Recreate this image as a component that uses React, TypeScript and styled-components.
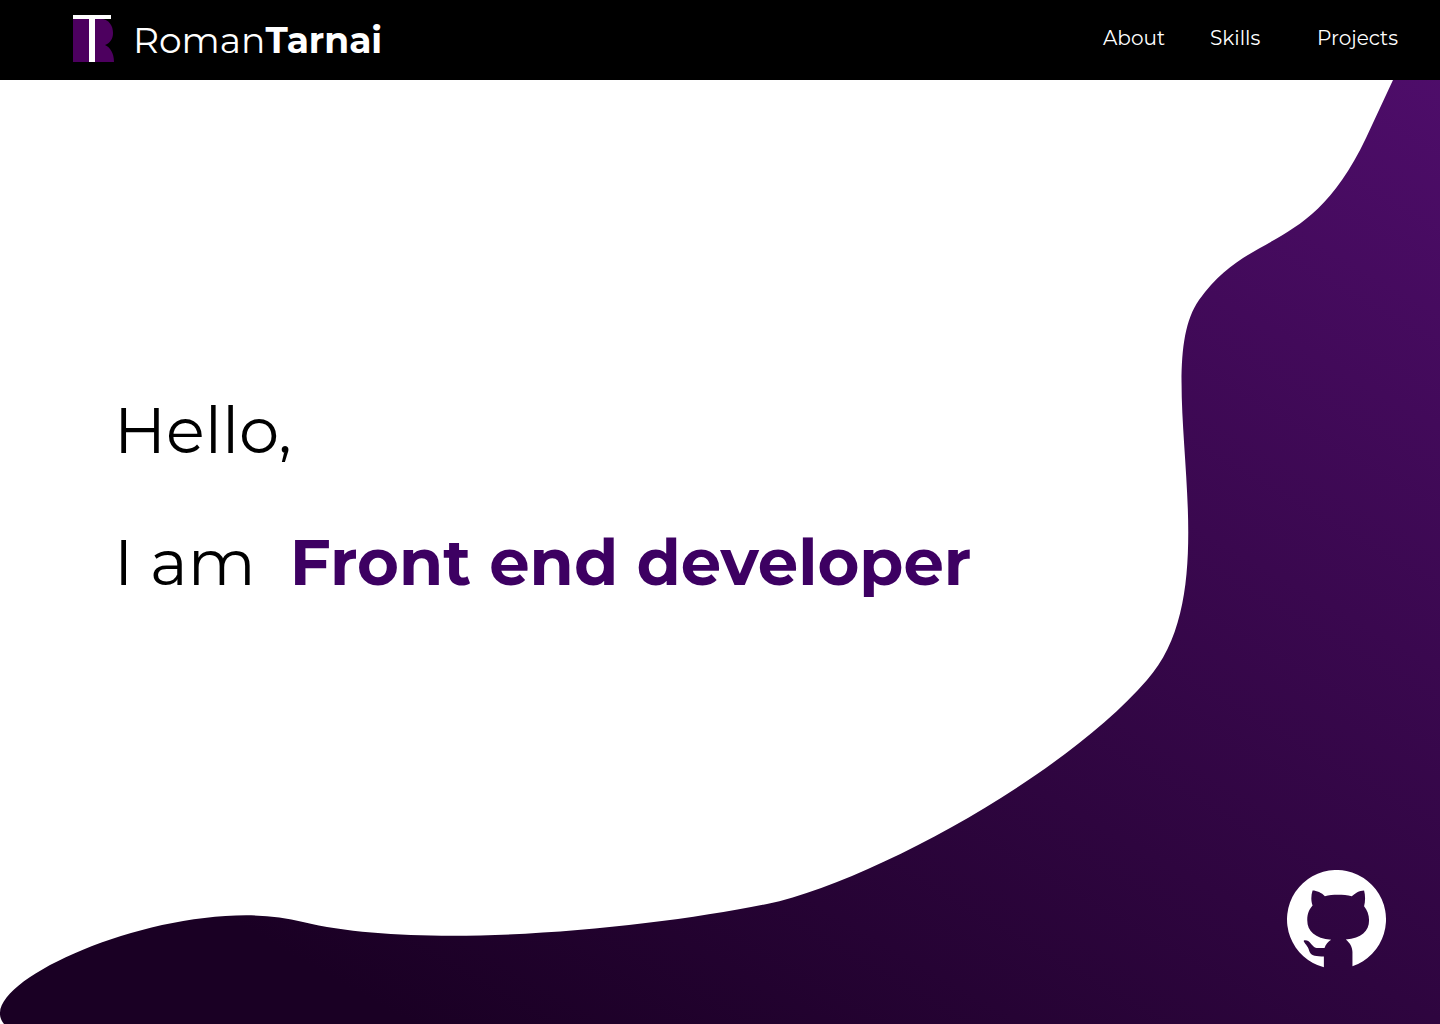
import React from "react";
import styled, { createGlobalStyle } from "styled-components";

const GlobalStyle = createGlobalStyle`
  *, *::before, *::after {
    box-sizing: border-box;
  }
  body {
    margin: 0;
    background: #ffffff;
    color: #000000;
    font-family: Montserrat, Inter, "Open Sans", sans-serif;
  }
`;

const Page = styled.div`
  display: flex;
  flex-direction: column;
  min-height: 100vh;
`;

const Header = styled.header`
  display: flex;
  align-items: center;
  justify-content: space-between;
  height: 80px;
  padding: 0 16px 2px 73px;
  background: #000000;
  color: #ffffff;
`;

const Brand = styled.a`
  display: flex;
  align-items: center;
  gap: 19px;
  color: inherit;
  text-decoration: none;
`;

const LogoMark = styled.svg`
  display: block;
  width: 41px;
  height: 48px;
`;

const BrandName = styled.span`
  padding-top: 2px;
  font-size: 36px;
  line-height: 44px;
  font-weight: 400;
`;

const Strong = styled.strong`
  font-weight: 700;
`;

const Nav = styled.nav`
  display: grid;
  grid-auto-flow: column;
  grid-auto-columns: 107px;
  padding-bottom: 2px;
`;

const NavLink = styled.a`
  justify-self: start;
  color: inherit;
  font-size: 20px;
  line-height: 24px;
  font-weight: 400;
  text-decoration: none;
`;

const Hero = styled.main`
  display: grid;
  flex: 1;
  grid-template: minmax(0, 1fr) / minmax(0, 1fr);

  & > * {
    grid-area: 1 / 1;
  }
`;

const Wave = styled.svg`
  display: block;
  width: 100%;
  height: 100%;
  min-height: 0;
`;

const Intro = styled.h1`
  display: flex;
  flex-direction: column;
  align-self: center;
  gap: 52px;
  margin: 0;
  padding: 0 114px 112px;
  font-size: 64px;
  line-height: 80px;
  font-weight: 400;
`;

const Line = styled.span`
  display: flex;
  flex-wrap: wrap;
  column-gap: 34px;
`;

const Role = styled.strong`
  color: #3d0062;
  font-weight: 700;
`;

const GithubLink = styled.a`
  align-self: end;
  justify-self: end;
  margin: 0 54px 55px 0;
`;

const GithubMark = styled.svg`
  display: block;
  width: 99px;
  height: 99px;
`;

const links = ["About", "Skills", "Projects"];

export default function App() {
  return (
    <Page>
      <GlobalStyle />
      <Header>
        <Brand href="#home">
          <LogoMark viewBox="0 0 41 48" aria-hidden="true">
            <path
              d="M0 4H28C36 4 40 11 40 18C40 24 37 28 32 30C37 32 41 38 41 47H0Z"
              fill="#4d005f"
            />
            <path d="M0 0H38V4H22V47H16V4H0Z" fill="#ffffff" />
          </LogoMark>
          <BrandName>
            Roman<Strong>Tarnai</Strong>
          </BrandName>
        </Brand>
        <Nav aria-label="Main">
          {links.map((label) => (
            <NavLink key={label} href={`#${label.toLowerCase()}`}>
              {label}
            </NavLink>
          ))}
        </Nav>
      </Header>
      <Hero id="home">
        <Wave viewBox="0 80 1440 944" preserveAspectRatio="none" aria-hidden="true">
          <defs>
            <linearGradient
              id="wave-fill"
              gradientUnits="userSpaceOnUse"
              x1="300"
              y1="960"
              x2="967"
              y2="-200"
            >
              <stop offset="0" stopColor="#1a0024" />
              <stop offset="1" stopColor="#4e0d6a" />
            </linearGradient>
          </defs>
          <path
            d="M1393 80L1366 138C1310 256 1250 228 1199 300C1148 372 1234 583 1147 680C1064 776 870 882 767 904C645 929 423 951 303 922C182 890 -32 982 4 1024H1440V80Z"
            fill="url(#wave-fill)"
          />
        </Wave>
        <Intro>
          <Line>Hello,</Line>
          <Line>
            <span>I am</span>
            <Role>Front end developer</Role>
          </Line>
        </Intro>
        <GithubLink href="#github" aria-label="GitHub">
          <GithubMark viewBox="51 31 298 298" aria-hidden="true">
            <path
              d="M162 324A149 149 0 1 1 248 321V278C248 262 240 250 228 240C275 236 298 215 298 182C298 165 292 152 283 140C287 125 287 108 283 93C268 93 256 102 246 110C220 104 188 104 165 110C156 100 140 93 128 93C123 108 123 125 128 138C118 150 112 162 112 182C112 215 135 236 184 241C175 246 167 256 164 266H140C125 264 122 240 102 243C98 248 115 258 118 275C122 288 135 292 162 291Z"
              fill="#ffffff"
            />
          </GithubMark>
        </GithubLink>
      </Hero>
    </Page>
  );
}
